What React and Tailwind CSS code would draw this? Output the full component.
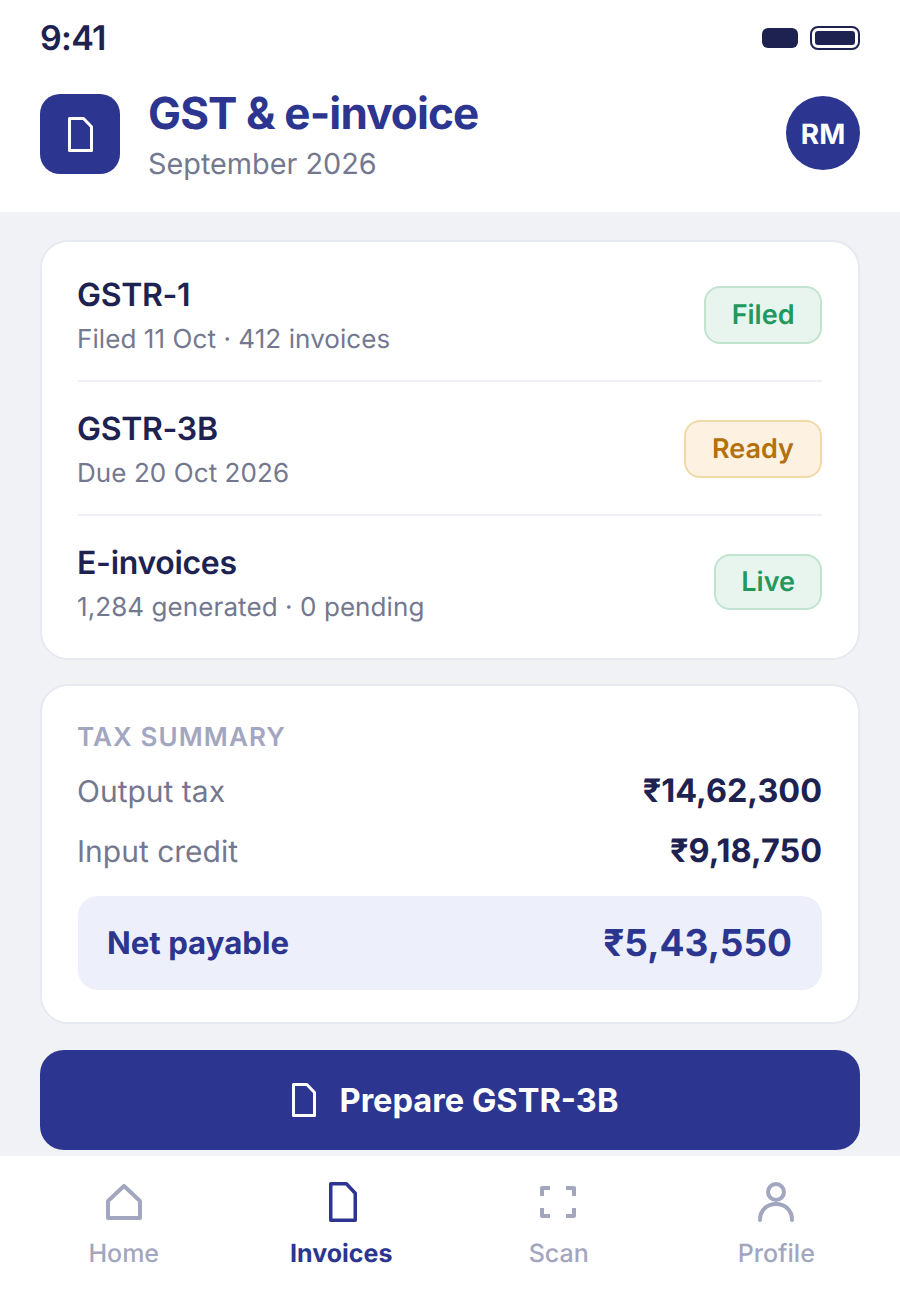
import React from "react";

const Doc = ({ className, w, h, sw = 3 }) => (
  <svg width={w} height={h} viewBox={`0 0 ${w} ${h}`} fill="none" className={className}>
    <path
      d={`M${sw / 2} ${sw / 2}H${w * 0.62}L${w - sw / 2} ${h * 0.28}V${h - sw / 2}H${sw / 2}Z`}
      stroke="currentColor"
      strokeWidth={sw}
      strokeLinejoin="round"
    />
  </svg>
);

const Row = ({ title, sub, badge, tone, border = true }) => (
  <div className={`flex items-center justify-between border-b-2 ${border ? "border-[#f0f1f6]" : "border-transparent"} h-[134px]`}>
    <div className="flex flex-col pt-[5px] -ml-px">
      <div className="text-[32px] leading-[36px] font-semibold tracking-[-0.01em] text-[#1e2251]">{title}</div>
      <div className="mt-[11px] text-[26px] leading-[32px] tracking-[0.08px] text-[#74788f]">{sub}</div>
    </div>
    <div className={`flex items-center rounded-[16px] border-2 text-[27px] font-semibold ${tone}`}>{badge}</div>
  </div>
);

const NavItem = ({ icon, label, active }) => (
  <div className={`flex-1 flex flex-col items-center ${active ? "text-[#2c3590] font-bold" : "text-[#a3a6bf] font-medium"}`}>
    <div className="h-[44px] flex items-center justify-center">{icon}</div>
    <div className="mt-[15px] text-[25px] leading-[30px]">{label}</div>
  </div>
);

export default function App() {
  return (
    <div className="w-[900px] h-[1300px] flex flex-col overflow-hidden bg-[#f0f2f6] font-['Inter',sans-serif] [text-rendering:geometricPrecision]">
      <header className="bg-white h-[212px] px-[40px] shrink-0">
        <div className="flex items-center justify-between h-[76px]">
          <span className="text-[34px] font-semibold tracking-[-0.02em] text-[#1e2251]">9:41</span>
          <div className="flex items-center gap-[12px]">
            <div className="w-[36px] h-[20px] rounded-[6px] bg-[#1e2251]" />
            <div className="w-[50px] h-[24px] rounded-[8px] border-2 border-[#1e2251] p-[3px]">
              <div className="w-full h-full rounded-[3px] bg-[#1e2251]" />
            </div>
          </div>
        </div>
        <div className="flex items-center justify-between h-[116px]">
          <div className="flex items-center gap-[28px]">
            <div className="w-[80px] h-[80px] rounded-[20px] bg-[#2c3590] flex items-center justify-center text-white">
              <Doc w={25} h={35} />
            </div>
            <div className="flex flex-col">
              <div className="text-[44px] leading-[52px] font-bold tracking-[-0.02em] text-[#2c3590]">GST &amp; e-invoice</div>
              <div className="mt-[7px] text-[28.8px] leading-[36px] text-[#74788f]">September 2026</div>
            </div>
          </div>
          <div className="mb-[2px] pt-[1px] w-[74px] h-[74px] rounded-full bg-[#2c3590] flex items-center justify-center text-white text-[28px] font-bold">RM</div>
        </div>
      </header>

      <main className="flex-1 px-[40px] pt-[28px] flex flex-col">
        <section className="bg-white rounded-[28px] border-2 border-[#e7e9f1] px-[36px] pt-[6px] h-[420px]">
          <Row title="GSTR-1" sub="Filed 11 Oct · 412 invoices" badge="Filed" tone="mt-[2px] h-[58px] px-[25.5px] bg-[#e8f5ee] border-[#c1e3d0] text-[#22985a]" />
          <Row title="GSTR-3B" sub="Due 20 Oct 2026" badge="Ready" tone="mt-[2px] h-[58px] px-[26px] bg-[#fdf2e2] border-[#f2d9a8] text-[#b4700a]" />
          <Row title="E-invoices" sub="1,284 generated · 0 pending" badge="Live" tone="h-[56px] px-[25px] bg-[#e8f5ee] border-[#c1e3d0] text-[#22985a]" border={false} />
        </section>

        <section className="mt-[24px] bg-white rounded-[28px] border-2 border-[#e7e9f1] px-[36px] pt-[36px] h-[340px]">
          <div className="-ml-px text-[26px] leading-[32px] font-semibold tracking-[1.1px] text-[#a3a6bf]">TAX SUMMARY</div>
          <div className="mt-[8px] h-[60px] flex items-center justify-between">
            <span className="-ml-px text-[30px] text-[#74788f]">Output tax</span>
            <span className="pb-[2px] text-[32.4px] font-bold text-[#1e2251]">₹14,62,300</span>
          </div>
          <div className="h-[60px] flex items-center justify-between">
            <span className="-ml-px text-[30px] text-[#74788f]">Input credit</span>
            <span className="pb-[2px] text-[32.4px] font-bold text-[#1e2251]">₹9,18,750</span>
          </div>
          <div className="mt-[14px] h-[94px] rounded-[20px] bg-[#edf0fb] px-[30px] flex items-center justify-between">
            <span className="-ml-px text-[31.2px] font-bold text-[#2c3590]">Net payable</span>
            <span className="text-[37px] font-bold text-[#2c3590]">₹5,43,550</span>
          </div>
        </section>

        <button className="mt-[26px] h-[100px] pl-[10px] rounded-[24px] bg-[#2c3590] text-white flex items-center justify-center gap-[24px] text-[32.6px] font-bold">
          <Doc w={24} h={34} />
          <span>Prepare GSTR-3B</span>
        </button>
      </main>

      <nav className="bg-white h-[144px] shrink-0 flex px-[15px] pt-[24px]">
        <NavItem label="Home" icon={
          <svg width="36" height="36" viewBox="0 0 36 36" fill="none"><path d="M2 17L18 2L34 17V34H2Z" stroke="currentColor" strokeWidth="4" strokeLinejoin="round" /></svg>
        } />
        <NavItem active label="Invoices" icon={<Doc className="ml-[4px]" w={28} h={40} sw={3.5} />} />
        <NavItem label="Scan" icon={
          <svg className="-ml-[2px]" width="36" height="32" viewBox="0 0 36 32" fill="none" stroke="currentColor" strokeWidth="4" strokeLinejoin="round"><path d="M2 10V2H10M26 2H34V10M2 22V30H10M26 30H34V22" /></svg>
        } />
        <NavItem label="Profile" icon={
          <svg width="36" height="40" viewBox="0 0 36 40" fill="none" stroke="currentColor" strokeWidth="4" strokeLinecap="round"><circle cx="18" cy="10" r="8" /><path d="M2 38C2 28 9 22 18 22C27 22 34 28 34 38" /></svg>
        } />
      </nav>
    </div>
  );
}
